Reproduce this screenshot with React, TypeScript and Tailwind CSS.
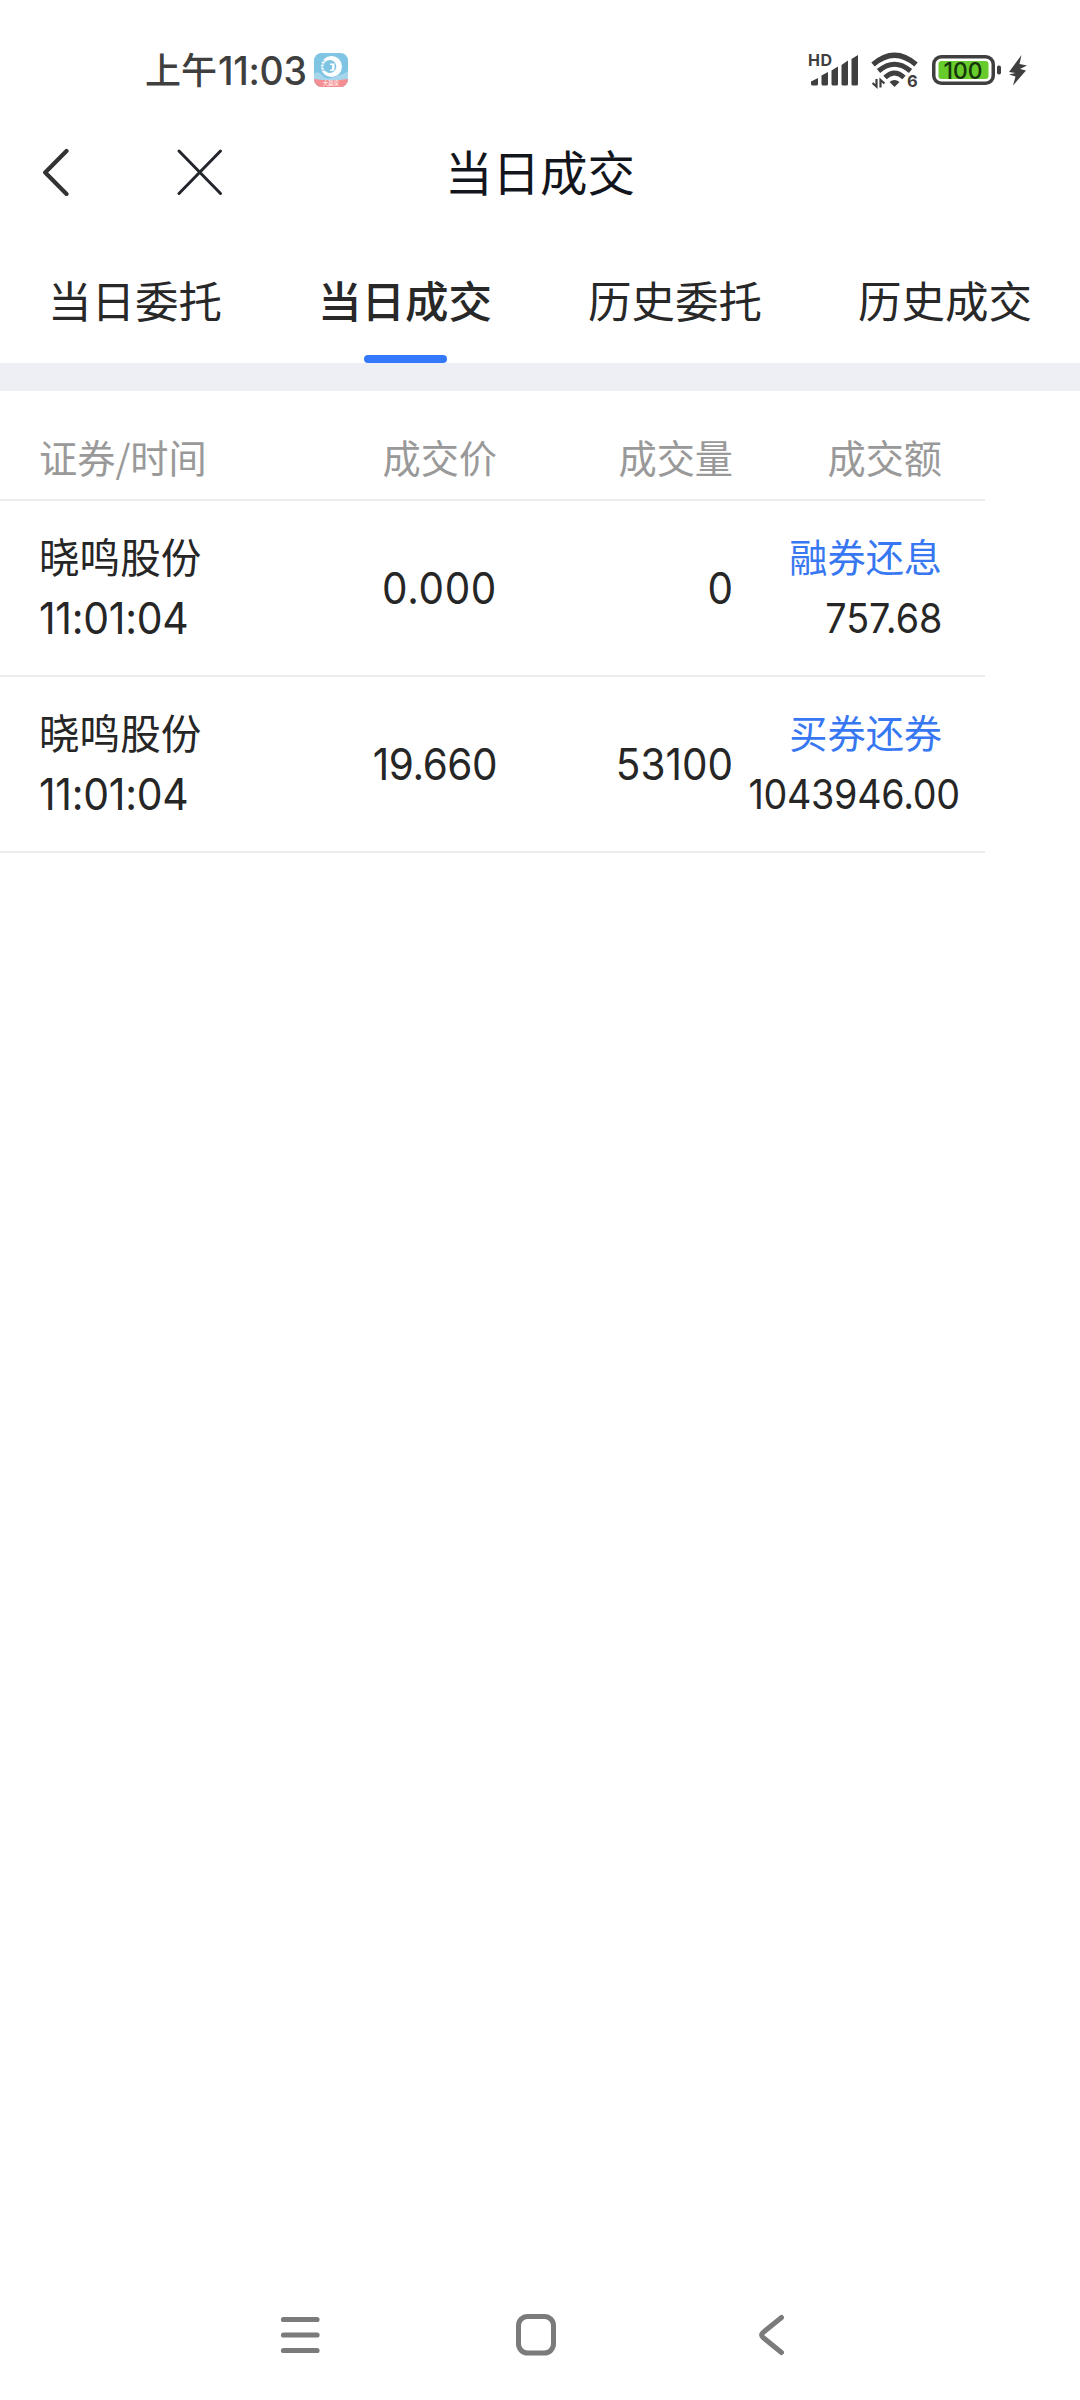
import clsx from 'clsx'

interface Deal {
  name: string
  time: string
  price: string
  volume: string
  action: string
  amount: string
  wide?: boolean
}

const tabs = ['当日委托', '当日成交', '历史委托', '历史成交']
const activeTab = '当日成交'

const deals: Deal[] = [
  {
    name: '晓鸣股份',
    time: '11:01:04',
    price: '0.000',
    volume: '0',
    action: '融券还息',
    amount: '757.68',
  },
  {
    name: '晓鸣股份',
    time: '11:01:04',
    price: '19.660',
    volume: '53100',
    action: '买券还券',
    amount: '1043946.00',
    wide: true,
  },
]

function AppBadge() {
  return (
    <svg className="h-[34px] w-[34px] overflow-visible" viewBox="0 0 34 34">
      <defs>
        <clipPath id="badge">
          <rect width="34" height="34" rx="7.5" />
        </clipPath>
      </defs>
      <g clipPath="url(#badge)">
        <rect width="34" height="34" fill="#7fc4e3" />
        <path d="M0 21Q4 17 8 22T17 25T26 22T34 18V34H0Z" fill="#a5d6ec" />
        <circle cx="17.5" cy="13.5" r="10.5" fill="#fff" />
        <circle cx="15.8" cy="13.5" r="6.5" fill="#7fc4e3" />
        <path d="M16 10.500h4.500v5a2.500 2.500 0 0 1-2.500 2.500h-2v-1.500h2V12h-2Z" fill="#fff" />
        <path d="M5 8h6M5 11h5M5 14h5M5 17h6" stroke="#7fc4e3" strokeWidth="1" />
        <path d="M0 26Q17 28.500 34 26V34H0Z" fill="#f58e92" />
      </g>
      <text
        x="17"
        y="32.300"
        textAnchor="middle"
        fontSize="5.500"
        fill="#fff"
        className="font-['Noto_Sans_CJK_SC',sans-serif]"
      >
        大赢家
      </text>
    </svg>
  )
}

function SignalIcon() {
  return (
    <svg className="h-[34px] w-[52px] overflow-visible" viewBox="0 0 52 34" fill="#3f3f3f">
      <text x="0" y="13" fontSize="16" fontWeight="700" textLength="24" className="font-['Inter',sans-serif]">
        HD
      </text>
      <path d="M3 28.500 10 25v6a1.500 1.500 0 0 1-1.500 1.500h-4A1.500 1.500 0 0 1 3 31Z" />
      <path d="M13.500 22.500 20 19v12a1.500 1.500 0 0 1-1.500 1.500h-3.500A1.500 1.500 0 0 1 13.500 31Z" />
      <path d="M23.500 17.500 30 13.500V31a1.500 1.500 0 0 1-1.500 1.500h-3.500A1.500 1.500 0 0 1 23.500 31Z" />
      <path d="M33.500 12 40 7.500V31a1.500 1.500 0 0 1-1.500 1.500h-3.500A1.500 1.500 0 0 1 33.500 31Z" />
      <path d="M43.500 6 50 2V31a1.500 1.500 0 0 1-1.500 1.500h-3.500A1.500 1.500 0 0 1 43.500 31Z" />
    </svg>
  )
}

function WifiIcon() {
  return (
    <svg className="h-9 w-[48px] overflow-visible" viewBox="0 0 48 36" fill="none" stroke="#3f3f3f">
      <path d="M2 12.500Q23.500-6 45 12.500" strokeWidth="5.200" />
      <path d="M7.500 19Q23.500 5.500 39.500 19" strokeWidth="5" />
      <path d="M14 25.500Q23.500 16.500 33 25.500" strokeWidth="4.800" />
      <path d="M18.500 30Q23.500 26 28.500 30L23.500 35Z" fill="#3f3f3f" stroke="none" />
      <path d="M5.500 27v7.500L1.500 31M9.500 35.500V28L13.500 31.500" strokeWidth="2.200" />
      <text
        x="36"
        y="34.500"
        fontSize="16.500"
        fontWeight="700"
        fill="#3f3f3f"
        stroke="none"
        className="font-['Inter',sans-serif]"
      >
        6
      </text>
    </svg>
  )
}

function BatteryIcon() {
  return (
    <svg className="h-[30px] w-[70px] overflow-visible" viewBox="0 0 70 30">
      <rect x="1.750" y="1.750" width="59.500" height="26.500" rx="7.500" fill="none" stroke="#3f3f3f" strokeWidth="3.500" />
      <rect x="6.500" y="6" width="50" height="18" rx="3" fill="#66cb2b" />
      <rect x="65" y="10.500" width="4" height="9" rx="1.800" fill="#3f3f3f" />
      <text
        x="31"
        y="23.500"
        textAnchor="middle"
        fontSize="23.500"
        fontWeight="500"
        textLength="39"
        lengthAdjust="spacingAndGlyphs"
        fill="#16330a"
        className="font-['Inter',sans-serif]"
      >
        100
      </text>
    </svg>
  )
}

function StatusBar() {
  return (
    <div className="flex h-[120px] items-center justify-between pt-5 pl-[145px] pr-[52px]">
      <div className="flex items-center">
        <span className="-mt-[4px] font-['Noto_Sans_CJK_SC',sans-serif] text-[36px] font-medium leading-none text-[#3f3f3f]">
          上午
        </span>
        <span className="ml-px w-[88px] origin-left scale-x-[0.960] font-['Inter',sans-serif] text-[39px] font-medium leading-none tracking-[-0.300px] text-[#3f3f3f]">
          11:03
        </span>
        <span className="ml-[8px]">
          <AppBadge />
        </span>
      </div>
      <div className="flex items-center">
        <SignalIcon />
        <span className="ml-[11px]">
          <WifiIcon />
        </span>
        <span className="ml-[13px]">
          <BatteryIcon />
        </span>
        <svg className="ml-[6px] h-[31px] w-5" viewBox="0 0 20 31" fill="#3f3f3f">
          <path d="M13.500 0 1 17 7.500 18 1 19.500 7.500 21.500 5 30.500 18 15.500 12 14 19 10.500 11.500 9Z" />
        </svg>
      </div>
    </div>
  )
}

function NavBar() {
  return (
    <header className="grid h-[106px] grid-cols-3 items-center pb-[2px]">
      <div className="flex items-center pl-[42px]">
        <svg className="h-12 w-7" viewBox="0 0 28 48" fill="none" stroke="#333" strokeWidth="4.200" strokeLinecap="round" strokeLinejoin="round">
          <path d="M24.500 3 3.200 24.500 24.500 46" />
        </svg>
        <svg className="ml-[106px] h-12 w-12" viewBox="0 0 48 48" fill="none" stroke="#22262a" strokeWidth="3" strokeLinecap="round">
          <path d="M3 3 44.500 45.500M44.500 3 3 45.500" />
        </svg>
      </div>
      <h1 className="-mt-[3px] text-center text-[47.500px] leading-none whitespace-nowrap text-[#12161c]">当日成交</h1>
    </header>
  )
}

function Tabs() {
  return (
    <nav className="grid h-[137px] grid-cols-4">
      {tabs.map((tab) => (
        <button
          key={tab}
          className={clsx(
            'flex flex-col items-center text-[43.500px] leading-none whitespace-nowrap text-[#282828]',
            tab === activeTab && 'font-medium',
          )}
        >
          <span className="mt-[52px]">{tab}</span>
          {tab === activeTab && <span className="mt-auto h-2 w-[83px] rounded-full bg-[#3478fb]" />}
        </button>
      ))}
    </nav>
  )
}

function DealRow({ deal }: { deal: Deal }) {
  return (
    <div className="grid h-44 grid-cols-[259px_238px_236px_209px] items-center border-b-2 border-[#ececec] text-[#262626]">
      <div className="flex flex-col pl-[39px]">
        <span className="-mt-[2px] text-[40.600px] leading-[60px]">{deal.name}</span>
        <span className="mt-[2px] origin-left scale-x-[0.930] font-['Inter',sans-serif] text-[44px] leading-[60px] tracking-[-0.300px]">
          {deal.time}
        </span>
      </div>
      <div
        className={clsx(
          "origin-right scale-x-[0.920] text-right font-['Inter',sans-serif] text-[44px]",
          deal.wide ? 'tracking-[-0.500px]' : 'tracking-[0.700px]',
        )}
      >
        {deal.price}
      </div>
      <div className="origin-right scale-x-[0.920] text-right font-['Inter',sans-serif] text-[44px]">{deal.volume}</div>
      <div className="flex flex-col items-end">
        <span className="-mt-[2px] text-[38.200px] leading-[60px] text-[#3777f2]">{deal.action}</span>
        <span
          className={clsx(
            "mt-[2px] origin-right scale-x-[0.920] font-['Inter',sans-serif] text-[41px] leading-[60px]",
            deal.wide && '-mr-[18px] tracking-[-0.300px]',
          )}
        >
          {deal.amount}
        </span>
      </div>
    </div>
  )
}

function SystemNav() {
  return (
    <footer className="mt-auto mb-[44px] flex h-[44px] items-center pl-[279px]">
      <svg className="h-11 w-11" viewBox="0 0 44 44" stroke="#7b7b7b" strokeWidth="5.200" strokeLinecap="round">
        <path d="M4.500 7.500h33.500M4.500 23h33.500M4.500 38.500h33.500" />
      </svg>
      <svg className="ml-[191px] h-11 w-11" viewBox="0 0 44 44" fill="none" stroke="#7b7b7b" strokeWidth="5">
        <rect x="4.500" y="4.500" width="35" height="36.500" rx="9" />
      </svg>
      <svg className="ml-[198px] h-11 w-8" viewBox="0 0 32 44" fill="none" stroke="#7b7b7b" strokeWidth="5" strokeLinecap="round">
        <path d="M25.500 5.500 7 20.500Q4.500 23 7 25.500L25.500 40.500" />
      </svg>
    </footer>
  )
}

export default function App() {
  return (
    <div className="flex h-[2400px] w-[1080px] flex-col overflow-hidden bg-white font-['Noto_Sans_CJK_SC',sans-serif]">
      <StatusBar />
      <NavBar />
      <Tabs />
      <div className="h-7 bg-[#eeeff5]" />

      {/* 成交列表 */}
      <main className="w-[985px]">
        <div className="grid h-[110px] grid-cols-[259px_238px_236px_209px] items-end border-b-2 border-[#ececec] pb-[23px] text-[38.200px] leading-none text-[#999]">
          <span className="pl-[39px] whitespace-nowrap">证券/时间</span>
          <span className="text-right">成交价</span>
          <span className="text-right">成交量</span>
          <span className="text-right">成交额</span>
        </div>
        {deals.map((deal) => (
          <DealRow key={deal.action} deal={deal} />
        ))}
      </main>

      <SystemNav />
    </div>
  )
}
